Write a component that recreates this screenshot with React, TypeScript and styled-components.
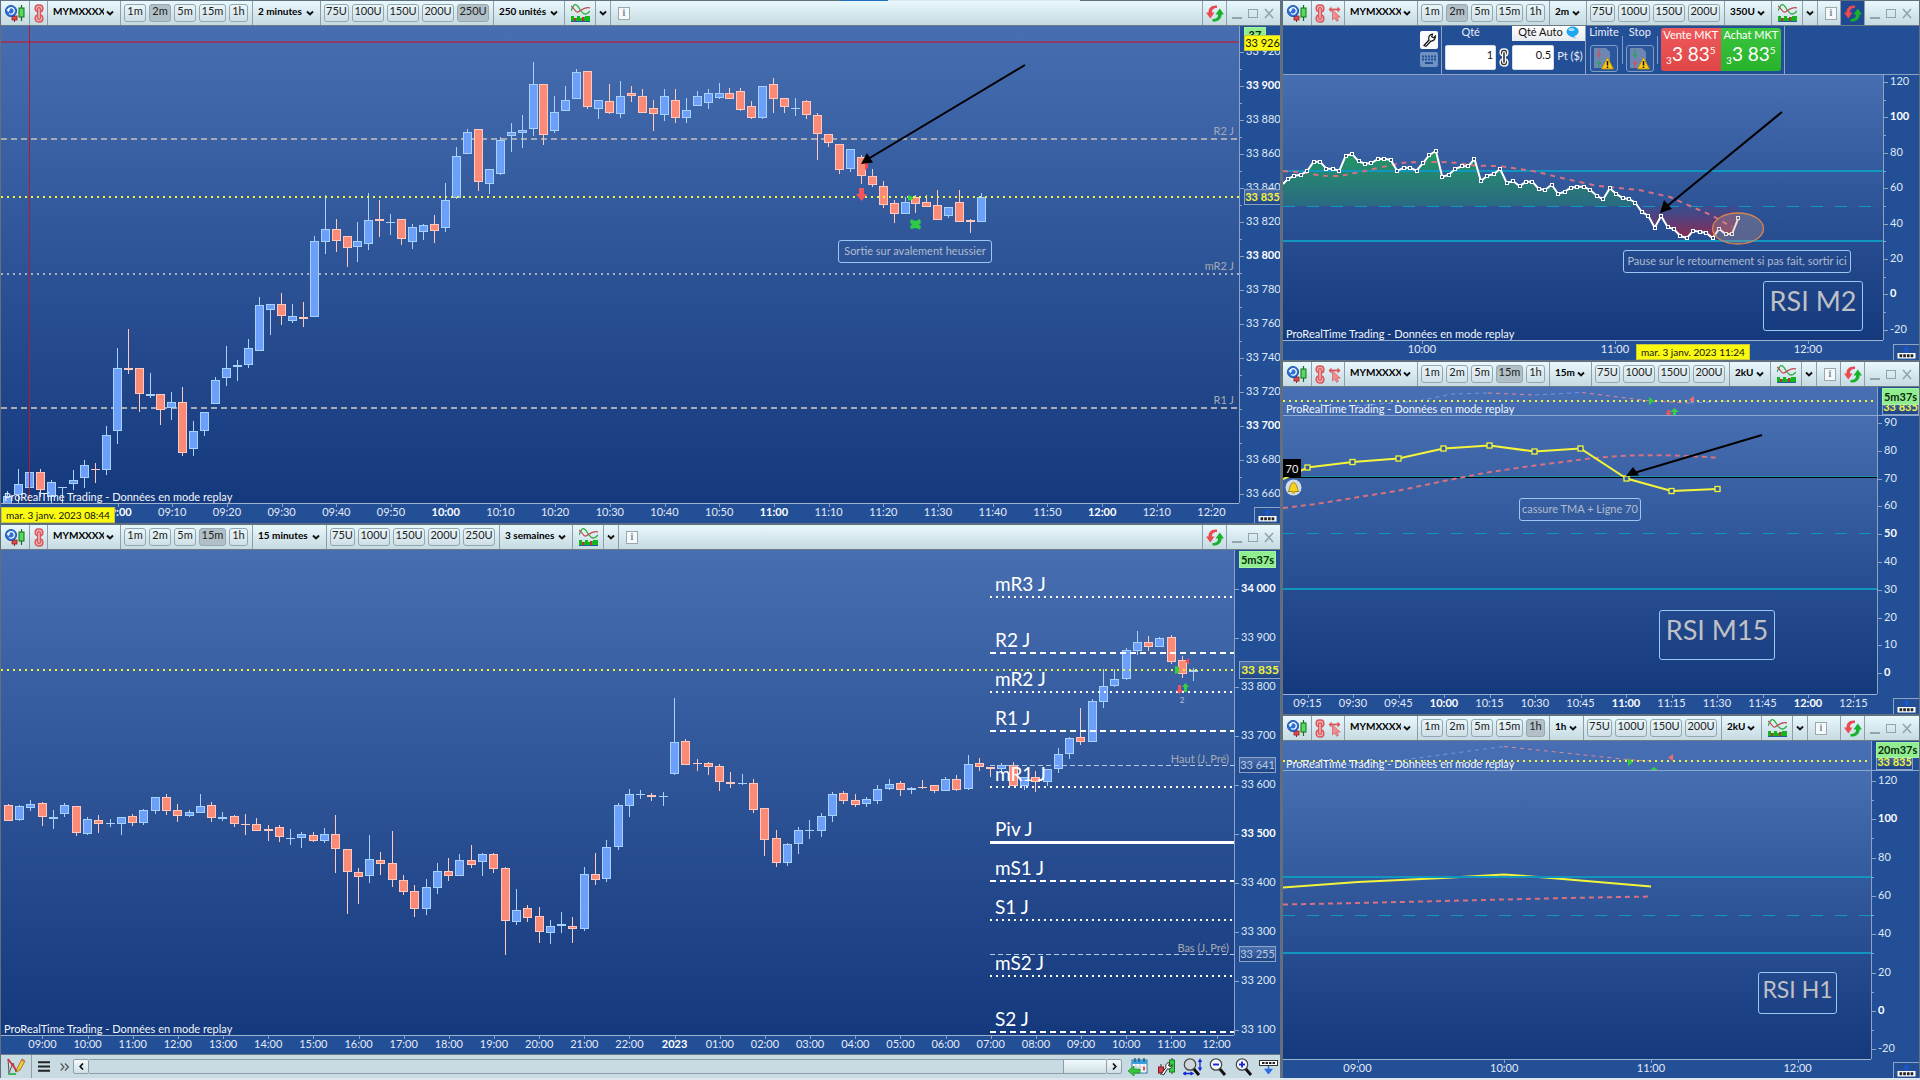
import React from "react";
import styled, { createGlobalStyle } from "styled-components";

/* ---------- theme ---------- */
const c = {
  frame: "#61707f",
  axis: "#234f97",
  line: "#8ea3c4",
  cyan: "#1196c0",
  up: "#6c9ffa",
  upEdge: "#a6d2fb",
  down: "#fb8a76",
  downEdge: "#ffc9be",
  yellow: "#f4f43a",
};

const Global = createGlobalStyle`
  *, *::before, *::after { box-sizing: border-box; }
  body {
    margin: 0;
    background: ${c.axis};
    font-family: Lato, "Noto Sans", sans-serif;
    font-size: 11px;
    line-height: 14px;
  }
  button, input, select { font: inherit; }
`;

/* ---------- page skeleton ---------- */
const Page = styled.div`
  display: flex;
  flex-direction: column;
  min-height: 100vh;
  overflow: hidden;
`;
const TopStrip = styled.div`
  height: 1px;
  background: linear-gradient(90deg, ${c.frame} 43.75%, #1f6fc0 43.75% 46.25%, #dbe8f2 46.25% 56.25%, ${c.frame} 56.25%);
`;
const BottomStrip = styled.div`
  height: 2px;
  background: #dfe7ee;
`;
const Columns = styled.main`
  flex: 1;
  display: grid;
  grid-template-columns: minmax(0, 2fr) minmax(0, 1fr);
`;
const Column = styled.div<{ $right?: boolean }>`
  display: flex;
  flex-direction: column;
  border: solid ${c.frame};
  border-width: ${(p) => (p.$right ? "0 1px 0 3px" : "0 0 0 1px")};
`;
const Win = styled.section<{ $grow: number; $gap?: boolean }>`
  display: flex;
  flex-direction: column;
  flex: ${(p) => `${p.$grow} 1 ${p.$grow}px`};
  border-top: ${(p) => (p.$gap ? `2px solid ${c.frame}` : "0")};
`;

/* ---------- toolbar ---------- */
const Toolbar = styled.header`
  display: flex;
  flex: none;
  height: 25px;
  overflow: hidden;
  background: linear-gradient(#e8f8fd, #c6dae1);
  border-bottom: 1px solid #6c7c86;
  color: #111;
`;
const Cell = styled.div<{ $w?: number }>`
  display: flex;
  flex: none;
  align-items: center;
  justify-content: center;
  gap: 3px;
  width: ${(p) => (p.$w ? `${p.$w}px` : "auto")};
  padding: ${(p) => (p.$w ? "0" : "0 4px 0 3px")};
  border-right: 1px solid #8d9ea8;
`;
const Spacer = styled.div`
  flex: 1;
  display: flex;
  align-items: center;
  min-width: 0;
  padding-left: 7px;
`;
const TfButton = styled.button<{ $on?: boolean; $w: number }>`
  width: ${(p) => p.$w}px;
  height: 18px;
  padding: 0 0 4px;
  line-height: 12px;
  color: #222;
  border: 1px solid ${(p) => (p.$on ? "#97a8b0" : "#93a7b1")};
  border-radius: 3px;
  background: ${(p) => (p.$on ? "#b1bfc6" : "linear-gradient(#e9f6fa, #cfdfe6)")};
`;
const IconButton = styled.button<{ $dark?: boolean }>`
  display: flex;
  align-items: center;
  justify-content: center;
  padding: 0;
  border: 0;
  background: ${(p) => (p.$dark ? "#1f4a92" : "none")};
  align-self: stretch;
  flex: ${(p) => (p.$dark ? 1 : "none")};
`;
const SelectCell = styled.label<{ $w: number }>`
  position: relative;
  display: flex;
  flex: none;
  align-items: center;
  width: ${(p) => p.$w}px;
  border-right: 1px solid #8d9ea8;
`;
const Select = styled.select`
  appearance: none;
  width: 100%;
  height: 22px;
  padding: 0 16px 4px 5px;
  border: 0;
  background: none;
  color: #000;
  font-size: 10px;
  font-weight: 700;
`;
const SelectArrow = styled.svg`
  position: absolute;
  right: 6px;
  top: 9px;
  pointer-events: none;
`;
const Info = styled.button`
  width: 12px;
  height: 13px;
  padding: 0;
  border: 1px solid #9aa7ad;
  background: #f4fafc;
  color: #7b878d;
  font: 700 10px/10px "Liberation Serif", serif;
`;
const WinControls = styled.div<{ $gap: number }>`
  display: flex;
  flex: none;
  align-items: center;
  gap: 6px;
  padding: 0 ${(p) => p.$gap}px 0 5px;
`;

/* ---------- chart parts ---------- */
const Body = styled.div<{ $grow: number; $sep?: boolean }>`
  display: flex;
  flex: ${(p) => `${p.$grow} 1 ${p.$grow}px`};
  border-bottom: ${(p) => (p.$sep ? "1px solid #8ea9d0" : "0")};
`;
const PlotBox = styled.div<{ $flat?: boolean }>`
  position: relative;
  flex: 1;
  min-width: 0;
  overflow: hidden;
  background: ${(p) =>
    p.$flat ? "linear-gradient(#486fb3, #436bb0)" : "linear-gradient(#466eb1, #14397c)"};
`;
const Canvas = styled.svg`
  position: absolute;
  inset: 0;
  width: 100%;
  height: 100%;
  display: block;
`;
const PriceAxisBox = styled.div<{ $w: number }>`
  position: relative;
  flex: none;
  width: ${(p) => p.$w}px;
  overflow: hidden;
  border-left: 1px solid ${c.line};
  background: ${c.axis};
`;
const PriceTick = styled.span<{ $bold?: boolean }>`
  position: absolute;
  left: 0;
  height: 12px;
  line-height: 12px;
  margin-top: -7px;
  padding-left: 6px;
  white-space: nowrap;
  color: ${(p) => (p.$bold ? "#fff" : "#dfe8f5")};
  font-weight: ${(p) => (p.$bold ? 700 : 400)};
  &::before {
    content: "";
    position: absolute;
    left: 0;
    top: 7px;
    width: 4px;
    height: 1px;
    background: ${c.line};
  }
`;
const MinorTick = styled.i`
  position: absolute;
  left: 0;
  width: 2px;
  height: 1px;
  background: ${c.line};
`;
const TimeRow = styled.div<{ $h: number }>`
  display: flex;
  flex: none;
  height: ${(p) => p.$h}px;
  background: ${c.axis};
`;
const TimeAxisBox = styled.div`
  position: relative;
  flex: 1;
  min-width: 0;
  border-top: 1px solid #9fb3d0;
`;
const TimeTick = styled.span<{ $bold?: boolean }>`
  position: absolute;
  top: 1px;
  width: 40px;
  margin-left: -20px;
  text-align: center;
  color: ${(p) => (p.$bold ? "#fff" : "#e3ebf7")};
  font-weight: ${(p) => (p.$bold ? 700 : 400)};
  &::before {
    content: "";
    position: absolute;
    left: 20px;
    top: -1px;
    width: 1px;
    height: 3px;
    background: ${c.line};
  }
`;
const DateTag = styled.span`
  position: absolute;
  z-index: 1;
  top: 3px;
  height: 16px;
  width: 114px;
  line-height: 15px;
  font-size: 10px;
  text-align: center;
  white-space: nowrap;
  background: #fafa10;
  border: 1px solid #c9c940;
  color: #111;
`;
const Corner = styled.div<{ $w: number }>`
  display: flex;
  flex: none;
  justify-content: flex-end;
  align-items: flex-end;
  width: ${(p) => p.$w}px;
`;
const CornerButton = styled.button`
  display: flex;
  align-items: flex-end;
  justify-content: center;
  width: 26px;
  height: 16px;
  padding: 0 0 1px;
  border: solid ${c.line};
  border-width: 1px 0 0 1px;
  background: ${c.axis};
`;
const Watermark = styled.span`
  position: absolute;
  left: 3px;
  bottom: -1px;
  white-space: nowrap;
  color: #f2f6fc;
`;
const Level = styled.span`
  position: absolute;
  height: 14px;
  margin-top: -7px;
  right: 5px;
  color: #a7aab4;
  white-space: nowrap;
`;
const BigLevel = styled.span`
  position: absolute;
  margin-top: -13px;
  line-height: 24px;
  font-size: 19px;
  color: #fff;
  white-space: nowrap;
`;
const Note = styled.span<{ $w: number }>`
  position: absolute;
  width: ${(p) => p.$w}px;
  height: 23px;
  line-height: 19px;
  text-align: center;
  white-space: nowrap;
  border: 1px solid #9ac8f2;
  border-radius: 3px;
  color: #aebccf;
`;
const Title = styled.span<{ $w: number; $small?: boolean }>`
  position: absolute;
  width: ${(p) => p.$w}px;
  height: ${(p) => (p.$small ? 42 : 50)}px;
  line-height: ${(p) => (p.$small ? 32 : 38)}px;
  font-size: ${(p) => (p.$small ? 23 : 27)}px;
  text-align: center;
  white-space: nowrap;
  border: 1px solid #9ac8f2;
  border-radius: 3px;
  color: #bfc1c6;
`;
type TagKind = "green" | "yellow" | "last" | "ref";
const tagLook: Record<TagKind, string> = {
  green: "background:#90ee90;color:#0b2a0b;font-weight:700;border:1px solid #a5f3a5;",
  yellow: "background:#fafa10;color:#111;border:1px solid #c9c940;",
  last: "background:linear-gradient(#4a6fae,#1d4485);color:#f4f43a;font-weight:700;border:1px solid #8ea3c4;",
  ref: "background:linear-gradient(#4a6fae,#1d4485);color:#b9c9e2;border:1px solid #8ea3c4;",
};
const Tag = styled.span<{ $kind: TagKind; $h?: number; $w?: number }>`
  position: absolute;
  left: 4px;
  width: ${(p) => p.$w ?? 37}px;
  height: ${(p) => p.$h ?? 16}px;
  line-height: ${(p) => (p.$h ?? 16) - 2}px;
  overflow: hidden;
  text-align: center;
  white-space: nowrap;
  font-size: ${(p) => (p.$w === 42 ? 12 : 11)}px;
  ${(p) => tagLook[p.$kind]}
`;
const LevelHandle = styled.span`
  position: absolute;
  left: 0;
  width: 18px;
  height: 18px;
  padding-top: 3px;
  text-align: center;
  background: #000;
  color: #eee;
`;
const Bell = styled.svg`
  position: absolute;
  left: 2px;
`;
const Count = styled.span`
  position: absolute;
  width: 10px;
  margin: -5px 0 0 -5px;
  font-size: 8px;
  line-height: 10px;
  text-align: center;
  color: #b9c4d8;
`;

/* ---------- order ticket ---------- */
const Ticket = styled.form`
  display: flex;
  flex: none;
  justify-content: center;
  height: 49px;
  margin: 0;
  background: ${c.axis};
  border-bottom: 1px solid ${c.line};
  color: #e8eef8;
`;
const TicketPart = styled.div<{ $gap?: number; $flush?: boolean }>`
  display: flex;
  gap: ${(p) => p.$gap ?? 0}px;
  padding: 0 ${(p) => (p.$flush ? 0 : 3)}px 0 3px;
  border-right: 1px solid ${c.line};
`;
const Stack = styled.div<{ $center?: boolean; $w?: number }>`
  display: flex;
  flex-direction: column;
  align-items: ${(p) => (p.$center ? "center" : "stretch")};
  width: ${(p) => (p.$w ? `${p.$w}px` : "auto")};
`;
const ToolColumn = styled.div`
  display: flex;
  flex-direction: column;
  gap: 3px;
  padding-top: 5px;
`;
const WhiteTool = styled.button<{ $dim?: boolean }>`
  display: flex;
  align-items: center;
  justify-content: center;
  width: 18px;
  height: ${(p) => (p.$dim ? 15 : 18)}px;
  padding: 0;
  border: 0;
  border-radius: 2px;
  background: ${(p) => (p.$dim ? "#6f92c3" : "#fbfcfd")};
`;
const FieldLabel = styled.label`
  height: 19px;
  line-height: 12px;
  text-align: center;
`;
const QtyInput = styled.input<{ $w: number }>`
  width: ${(p) => p.$w}px;
  height: 25px;
  padding: 0 2px 6px;
  text-align: right;
  border: 1px solid #d5dce4;
  border-radius: 2px;
  background: #fff;
  color: #111;
`;
const AutoButton = styled.button`
  display: flex;
  align-items: center;
  justify-content: space-between;
  width: 73px;
  height: 15px;
  margin: 0 0 4px;
  padding: 0 6px 3px;
  border: 0;
  background: linear-gradient(#fff, #e6eaee);
  color: #111;
`;
const InlineRow = styled.div`
  display: flex;
  align-items: center;
  gap: 3px;
`;
const UnitLabel = styled.label`
  padding-bottom: 4px;
`;
const ChainWrap = styled.div`
  display: flex;
  padding-top: 22px;
`;
const OrderButton = styled.button`
  display: flex;
  align-items: center;
  justify-content: center;
  width: 28px;
  height: 27px;
  padding: 0;
  border: 1px solid #7f9cc9;
  border-radius: 3px;
  background: #2b569c;
`;
const Divider = styled.i`
  width: 1px;
  height: 28px;
  margin-top: 10px;
  background: #7f9cc9;
`;
const Market = styled.button<{ $buy?: boolean }>`
  display: flex;
  flex-direction: column;
  align-items: center;
  width: 60px;
  height: 43px;
  margin-top: 2px;
  padding: 0;
  border: 0;
  border-radius: ${(p) => (p.$buy ? "0 3px 3px 0" : "3px 0 0 3px")};
  background: ${(p) => (p.$buy ? "linear-gradient(#3cc43f, #28b32c)" : "linear-gradient(#ee5a5c, #e04547)")};
  color: #fff;
  white-space: nowrap;
`;
const MarketPair = styled.div`
  display: flex;
`;
const Price = styled.span`
  display: flex;
  font-size: 19px;
  line-height: 24px;
`;
const PriceSmall = styled.small<{ $top?: boolean }>`
  align-self: ${(p) => (p.$top ? "flex-start" : "flex-end")};
  font-size: 10px;
  line-height: ${(p) => (p.$top ? 16 : 12)}px;
`;

/* ---------- bottom bar ---------- */
const BottomBar = styled.footer`
  display: flex;
  flex: none;
  align-items: center;
  height: 24px;
  border-top: 1px solid #6c7c86;
  background: #c8dae2;
`;
const BarButton = styled.button<{ $w: number; $edge?: boolean }>`
  display: flex;
  flex: none;
  align-items: center;
  justify-content: center;
  width: ${(p) => p.$w}px;
  height: 23px;
  padding: 0;
  border: 0;
  border-right: ${(p) => (p.$edge ? "1px solid #8d9ea8" : "0")};
  background: none;
`;
const Scroll = styled.div`
  display: flex;
  flex: 1;
  height: 15px;
  margin-right: 2px;
`;
const ScrollButton = styled.button`
  display: flex;
  align-items: center;
  justify-content: center;
  width: 16px;
  padding: 0;
  border: 1px solid #8d9ea8;
  border-radius: 2px;
  background: linear-gradient(#f4fbfd, #cfdfe5);
`;
const Track = styled.div`
  display: flex;
  flex: 1;
  justify-content: flex-end;
  border: solid #8d9ea8;
  border-width: 1px 0;
`;
const Thumb = styled.div`
  width: 43px;
  border-left: 1px solid #8d9ea8;
  background: linear-gradient(#f0fafd, #cfdfe5);
`;

/* ---------- icons ---------- */
const Chevron = ({ d = "M1 1.5 L4 4.5 L7 1.5" }: { d?: string }) => (
  <svg width="8" height="6" viewBox="0 0 8 6"><path d={d} fill="none" stroke="#111" strokeWidth="1.9" /></svg>
);
const ReplayIcon = () => (
  <svg width="20" height="18" viewBox="0 0 20 18">
    <path d="M9.5 11v7" stroke="#8d1f1f" />
    <rect x="7" y="12" width="5" height="4" fill="#e04a4a" stroke="#8d1f1f" strokeWidth=".8" />
    <path d="M16.5 1v16" stroke="#12701a" strokeWidth="1.2" />
    <rect x="14" y="4" width="5" height="9" fill="#56d95c" stroke="#12701a" />
    <circle cx="6" cy="7" r="5.6" fill="#2d6fd8" stroke="#1446a0" strokeWidth=".8" />
    <path d="M3 6.2a3.2 3.2 0 1 1 1.2 3.3" fill="none" stroke="#fff" strokeWidth="1.3" />
    <path d="M1.6 5.2l1.6 3 2.1-2.6z" fill="#fff" />
  </svg>
);
const LinkIcon = ({ color = "#d9565b", fill = "#f0b5b8" }: { color?: string; fill?: string }) => (
  <svg width="10" height="19" viewBox="0 0 10 19">
    <g fill={fill} stroke={color} strokeWidth="1.5">
      <rect x="1.2" y="1" width="7.6" height="7" rx="3.2" />
      <rect x="1.2" y="11" width="7.6" height="7" rx="3.2" />
    </g>
    <rect x="3.6" y="3.6" width="2.8" height="11.8" rx="1.4" fill={fill} stroke={color} strokeWidth="1.2" />
  </svg>
);
const PointerIcon = () => (
  <svg width="13" height="17" viewBox="0 0 13 17">
    <path d="M2 4.500h9" stroke="#d9565b" strokeWidth="1.8" />
    <path d="M3.500 1.500L.5 4.500l3 3zM9.500 1.500l3 3-3 3z" fill="#d9565b" />
    <path d="M4.500 5v10l2.400-2.200 1.600 3.400 1.900-.8-1.600-3.300h3.400z" fill="#f08f92" stroke="#d9565b" strokeWidth=".7" />
  </svg>
);
const StudyIcon = () => (
  <svg width="19" height="20" viewBox="0 0 19 20">
    <path d="M0 8C3 0 5 0 8 5s6 9 11 3" fill="none" stroke="#2eae3a" strokeWidth="1.3" />
    <path d="M0 3c3 1 4 7 7 6s6-6 12-4" fill="none" stroke="#c2474e" strokeWidth="1.3" />
    <path d="M0 19v-6h3v2h3v-2h3v2h3v-1h2v-1h5v6z" fill="#12b51c" />
    <path d="M3 18v-3h2v3zM11 18v-4h2v4z" fill="#c2303a" />
    <path d="M0 18.500h19" stroke="#2060a0" />
  </svg>
);
const SwapIcon = () => (
  <svg width="18" height="17" viewBox="0 0 18 17">
    <path d="M11 .5C5 0 2 3.500 2.600 8H6C5.600 5 7.500 2.800 11 3z" fill="#ea4a50" />
    <path d="M0 7.500h8.500L4.300 13.500z" fill="#ea4a50" />
    <path d="M6.500 16.500C12.500 17 16 13.500 15.600 9H12c.5 3-1.500 5-5.500 5z" fill="#17b22b" />
    <path d="M9.500 9.500H18L13.800 3.500z" fill="#17b22b" />
  </svg>
);
const WinIcon = ({ kind }: { kind: "min" | "max" | "close" }) => (
  <svg width="10" height="12" viewBox="0 0 10 12" fill="none" stroke="#93a3ab">
    {kind === "min" && <path d="M0 11h10" strokeWidth="2" />}
    {kind === "max" && <rect x=".5" y="2.500" width="9" height="8" />}
    {kind === "close" && <path d="M1 2l8 9M9 2l-8 9" strokeWidth="1.600" />}
  </svg>
);
const RowIcon = ({ down }: { down?: boolean }) => (
  <svg width="19" height="14" viewBox="0 0 19 14">
    {down ? (
      <><rect x=".5" y=".5" width="18" height="5" fill="#fff" stroke="#333" /><path d="M3 3h13" stroke="#222" strokeWidth="2" strokeDasharray="2.500 1" /><path d="M9.500 6v4M9.500 13.500l-3-4h6z" stroke="#2a6fe0" strokeWidth="1.500" fill="#2a6fe0" /></>
    ) : (
      <><path d="M9.500 1l-3 3.500h6z" fill="#1d56d8" /><path d="M9.500 4v4" stroke="#1d56d8" strokeWidth="2" /><rect x=".5" y="8" width="18" height="5.500" fill="#fff" /><path d="M2.500 10.800h14" stroke="#222" strokeWidth="3" strokeDasharray="2.700 1" /></>
    )}
  </svg>
);
const MenuIcon = () => (
  <svg width="12" height="11" viewBox="0 0 12 11"><path d="M0 1.200h12M0 5.500h12M0 9.800h12" stroke="#222" strokeWidth="2" /></svg>
);
const MoreIcon = () => (
  <svg width="9" height="8" viewBox="0 0 9 8"><path d="M.7.5L4 4 .7 7.500M5 .5L8.300 4 5 7.500" fill="none" stroke="#555" strokeWidth="1.200" /></svg>
);
const ArrowGlyph = ({ left }: { left?: boolean }) => (
  <svg width="5" height="7" viewBox="0 0 5 7"><path d={left ? "M4 .5L1.200 3.500 4 6.500" : "M1 .5L3.800 3.500 1 6.500"} fill="none" stroke="#111" strokeWidth="1.700" /></svg>
);
const PencilIcon = () => (
  <svg width="18" height="17" viewBox="0 0 18 17">
    <path d="M1 1l1 14 4-10 3 9" fill="none" stroke="#555" />
    <path d="M1 1l9 12" stroke="#d8303a" strokeWidth="1.700" />
    <path d="M1 16h8" stroke="#1fae3c" strokeWidth="1.600" />
    <path d="M9 14l1.300-4L15 1l3 2-5 9z" fill="#f6cc3c" stroke="#8d6a10" strokeWidth=".8" />
    <path d="M14.500 1.800l3 1.800" stroke="#e36a50" strokeWidth="1.500" />
  </svg>
);
const CalendarIcon = () => (
  <svg width="20" height="18" viewBox="0 0 20 18">
    <rect x="4" y="2" width="15" height="13" fill="#fff" stroke="#2a6f9c" />
    <rect x="4" y="2" width="15" height="4" fill="#3da0dc" />
    <path d="M7 0v4M11 0v4M16 0v4" stroke="#1c5278" strokeWidth="1.300" />
    <path d="M8 6v9M12 6v9M16 6v9M4 9h15M4 12h15" stroke="#bccad2" />
    <path d="M0 13l6-5v3h6v4H6v3z" fill="#35c43c" stroke="#1b8a25" strokeWidth=".7" />
    <rect x="15" y="9" width="2" height="3" fill="#e04a4a" />
  </svg>
);
const CandleToolIcon = () => (
  <svg width="17" height="18" viewBox="0 0 17 18">
    <path d="M3 6v11M14 0v16" stroke="#333" />
    <rect x=".5" y="9" width="5" height="6" fill="#d8414a" stroke="#84161d" />
    <rect x="11.500" y="2" width="5" height="12" fill="#39cf48" stroke="#137a20" />
    <path d="M3.500 15.500L8 9.500c-1-3 1-5.500 4-4.500l-1.500 2.500 2 1.200L14 6.500c.5 3.500-2 5-4.500 4.300L5.500 17z" fill="#fff" stroke="#222" strokeWidth="1" />
  </svg>
);
const LensIcon = ({ kind }: { kind: "fit" | "out" | "in" }) => (
  <svg width="19" height="18" viewBox="0 0 19 18">
    <path d="M10 10l6 7" stroke="#111" strokeWidth="3" />
    <circle cx="7" cy="6.500" r="5.700" fill={kind === "fit" ? "#cfd6da" : "#f2f8fb"} stroke="#444" strokeWidth="1.200" />
    {kind !== "fit" && <path d="M4 6.500h6" stroke="#1a25d8" strokeWidth="1.900" />}
    {kind === "in" && <path d="M7 3.500v6" stroke="#1a25d8" strokeWidth="1.900" />}
    {kind === "fit" && <path d="M17 2v9M15.500 4L17 1.500 18.500 4M15.500 9.500L17 12l1.500-2.500M1 15.500h8M3 14l-2.500 1.500L3 17M7.500 14l2.500 1.500L7.500 17" fill="none" stroke="#1a25d8" strokeWidth="1.300" />}
  </svg>
);
const WrenchIcon = () => (
  <svg width="13" height="14" viewBox="0 0 13 14"><path d="M1 12.500L6 7C5 4 7 1 9.500 1L8.700 3.800l1.800 1L12.300 3c.5 3-2 5.300-4.300 5L3 13.300z" fill="#fff" stroke="#111" strokeWidth="1.200" /></svg>
);
const KeyboardIcon = () => (
  <svg width="14" height="10" viewBox="0 0 14 10"><path d="M0 1.500h14M0 4.500h14" stroke="#234f97" strokeWidth="2" strokeDasharray="2 1" /><path d="M3 8h8" stroke="#234f97" strokeWidth="2" /></svg>
);
const BubbleIcon = () => (
  <svg width="13" height="12" viewBox="0 0 13 12"><path d="M6.500.5a6 4.800 0 1 1-1 9.500c2 0 4 .5 4 2C6 11 0 10 .6 5.200A6 4.800 0 0 1 6.500.5z" fill="#1ea7ee" /><ellipse cx="5.500" cy="3.500" rx="3" ry="1.600" fill="#a6e0fb" /></svg>
);
const OrderIcon = ({ top, bottom }: { top: string; bottom: string }) => (
  <svg width="21" height="22" viewBox="0 0 21 22">
    <path d="M1 0h12l4 4v16H1z" fill="#6d87b3" />
    <path d="M5.200 1h1.600v5h2L6 10 3.200 6h2z" fill={top} opacity=".85" />
    <path d="M5.200 20h1.600v-4h2L6 12l-2.800 4h2z" fill={bottom} opacity=".85" />
    <path d="M14.500 9.500l6 11.500h-12z" fill="#fbc81a" stroke="#b98a08" strokeWidth=".8" />
    <path d="M14.500 13v4.500M14.500 18.500v1.500" stroke="#111" strokeWidth="1.500" />
  </svg>
);

/* ---------- geometry ---------- */
interface Frame { x: number; y: number; w: number; h: number }
const left = (f: Frame, x: number) => `${((x - f.x) / f.w) * 100}%`;
const top = (f: Frame, y: number) => `${((y - f.y) / f.h) * 100}%`;

const Draw = ({ f, children }: { f: Frame; children: React.ReactNode }) => (
  <Canvas viewBox={`${f.x} ${f.y} ${f.w} ${f.h}`} preserveAspectRatio="none" aria-hidden="true">{children}</Canvas>
);

type Style = "solid" | "dash" | "dot" | "long";
const dashes: Record<Style, string | undefined> = { solid: undefined, dash: "6 4", dot: "2 4", long: "12 12" };
const H = ({ y, x1, x2, color, kind = "solid", t = 2 }: { y: number; x1: number; x2: number; color: string; kind?: Style; t?: number }) => (
  <path d={`M${x1} ${y + (t % 2 ? 0.5 : 0)}H${x2}`} stroke={color} strokeWidth={t} strokeDasharray={dashes[kind]} shapeRendering="crispEdges" />
);

type Candle = [0 | 1, number, number, number, number];
/* direction, high, body top, body bottom, low: thirds of a pixel from the base line */
const Candles = ({ data, x0, step, base }: { data: Candle[]; x0: number; step: number; base: number }) => (
  <g shapeRendering="crispEdges">
    {data.map(([up, hi, bt, bb, lo], i) => {
      const x = Math.floor(x0 + step * i);
      const y = (v: number) => Math.round(base + v / 3);
      const b1 = y(bt);
      const h = Math.max(1, y(bb) - b1);
      return (
        <g key={i}>
          <rect x={x} y={y(hi)} width="1" height={Math.max(1, y(lo) - y(hi))} fill={up ? c.upEdge : c.downEdge} />
          <rect x={x - 4} y={b1} width="9" height={h} fill={up ? c.upEdge : c.downEdge} />
          {h > 2 && <rect x={x - 3} y={b1 + 1} width="7" height={h - 2} fill={up ? c.up : c.down} />}
        </g>
      );
    })}
  </g>
);
const Arrow = ({ from, to, head }: { from: string; to: string; head: string }) => (
  <g><path d={`M${from}L${to}`} stroke="#000" strokeWidth="2" /><path d={`M${head}z`} fill="#000" /></g>
);

const m2: Candle[] = [
  [1,1473,1488,1515,1515],[1,1407,1452,1484,1510],[1,1407,1416,1463,1473],[0,1407,1416,1469,1490],[1,1440,1447,1490,1510],
  [1,1460,1460,1462,1510],[1,1410,1441,1453,1469],[1,1380,1396,1433,1463],[0,1389,1407,1411,1448],[1,1278,1306,1411,1424],
  [1,1045,1105,1294,1331],[0,987,1105,1111,1121],[0,1105,1105,1183,1235],[1,1119,1183,1187,1193],[0,1183,1183,1229,1274],
  [1,1176,1207,1224,1259],[0,1161,1207,1358,1367],[1,1264,1294,1346,1367],[1,1237,1237,1294,1307],[1,1132,1141,1213,1213],
  [1,1038,1105,1135,1157],[1,1080,1096,1102,1142],[1,1017,1045,1096,1103],[1,891,916,1054,1054],[1,913,913,931,1004],
  [0,879,913,949,974],[1,912,949,964,968],[0,906,952,958,980],[1,708,724,950,950],[1,586,688,727,762],
  [0,657,688,724,755],[0,709,709,745,800],[1,667,724,740,785],[1,579,661,733,749],[0,600,657,662,711],
  [1,642,666,668,704],[0,657,657,718,734],[1,673,682,727,746],[1,673,676,697,719],[0,645,673,694,728],
  [1,549,601,683,695],[1,441,469,593,597],[1,387,397,463,463],[0,388,388,545,572],[1,508,508,551,581],
  [1,411,421,521,524],[1,369,397,407,456],[1,345,391,398,444],[1,186,253,388,407],[0,253,253,404,434],
  [1,288,337,392,398],[1,258,301,332,332],[1,207,217,296,297],[0,214,214,320,326],[1,301,301,326,356],
  [0,252,304,338,342],[1,243,289,341,353],[0,258,280,287,305],[0,267,289,338,339],[0,300,325,341,392],
  [1,267,289,346,362],[0,267,301,353,369],[1,294,331,355,369],[1,273,289,317,318],[1,267,280,310,326],
  [1,249,280,295,296],[0,264,280,296,297],[0,264,274,331,333],[0,303,319,353,357],[1,259,259,355,356],
  [0,234,253,296,339],[0,294,295,320,338],[1,294,324,326,347],[0,299,304,346,356],[0,339,346,403,480],
  [0,403,403,428,440],[0,433,433,509,521],[1,448,448,506,516],[0,466,472,529,552],[0,507,529,556,560],
  [0,543,559,616,623],[0,600,610,643,668],[1,591,607,643,643],[0,586,591,611,639],[0,585,607,622,622],
  [0,570,616,661,661],[1,622,622,647,653],[0,570,607,667,667],[0,657,661,667,699],[1,579,592,667,667],
];
const m15: Candle[] = [
  [0,73,76,122,122],[1,75,79,119,122],[1,60,72,83,92],[0,67,70,110,137],[1,91,110,116,147],[1,70,76,103,110],
  [0,79,79,158,167],[1,111,118,161,165],[0,105,121,131,158],[1,117,129,131,141],[1,112,112,131,165],[0,103,109,128,137],
  [1,88,91,128,134],[1,52,52,92,101],[0,43,52,92,104],[0,73,91,107,125],[1,91,97,107,112],[1,43,79,98,98],
  [0,67,76,113,125],[1,97,111,116,122],[0,106,109,131,140],[0,102,131,133,165],[0,115,133,152,152],[0,135,147,152,183],
  [0,136,142,170,185],[1,148,174,176,195],[1,156,163,173,203],[0,157,166,182,185],[1,145,163,182,188],[0,105,163,208,279],
  [0,208,208,275,402],[0,265,277,290,372],[1,165,238,287,308],[0,216,241,251,285],[0,153,250,299,320],[0,286,301,335,344],
  [0,315,334,386,410],[1,297,322,386,404],[1,249,274,323,342],[0,235,274,287,302],[1,222,241,287,287],[0,195,241,254,265],
  [1,219,223,247,287],[0,220,223,266,278],[0,261,265,422,525],[1,327,391,425,434],[0,375,385,413,425],[0,381,409,455,488],
  [1,421,439,458,491],[1,396,433,437,458],[0,411,438,446,488],[1,261,283,446,452],[0,219,283,299,314],[1,180,202,296,307],
  [1,70,76,200,209],[1,27,43,77,110],[1,30,43,46,57],[0,38,46,52,63],[1,37,49,51,77],[1,-246,-113,-19,-16],
  [0,-122,-116,-46,-46],[0,-63,-51,-49,-28],[0,-55,-50,-40,-16],[0,-47,-41,5,32],[0,-23,7,12,23],[1,-17,9,11,15],
  [0,-3,10,91,99],[0,84,84,179,228],[0,151,175,250,260],[1,189,193,250,257],[1,142,151,193,221],[1,120,151,153,177],
  [1,100,109,153,170],[1,36,43,107,125],[0,34,40,62,73],[0,43,61,74,80],[1,51,58,71,80],[1,16,28,64,71],
  [1,-2,13,28,29],[0,4,10,31,47],[1,22,25,31,41],[0,0,21,23,27],[0,16,16,34,38],[1,-8,-2,34,34],
  [0,-14,-2,31,32],[1,-74,-47,28,29],[0,-65,-50,-38,-28],[0,-39,-38,-34,-9],[1,-50,-44,-34,-18],[0,-53,-44,18,18],
  [1,-10,-8,17,29],[0,-27,-8,5,35],[1,-33,-32,5,17],[1,-95,-77,-32,-20],[1,-130,-125,-79,-62],[0,-216,-128,-115,-106],
  [1,-242,-236,-115,-115],[1,-333,-281,-235,-217],[1,-333,-302,-283,-279],[1,-395,-389,-304,-301],[1,-447,-413,-388,-376],
  [0,-431,-413,-398,-388],[1,-428,-425,-400,-398],[0,-434,-428,-355,-349],[0,-372,-359,-319,-307],[1,-335,-329,-323,-298],
];

/* RSI of the 2-minute chart, one value for each bar: thirds of a pixel */
const rsiStep = 6.437;
const rsi = [537,527,524,514,485,485,506,506,513,467,462,484,491,489,477,476,480,513,503,503,512,489,465,453,531,524,507,499,499,477,543,527,522,507,549,543,558,545,545,567,569,554,582,575,563,560,560,570,587,598,565,581,594,597,608,636,647,683,648,681,688,708,714,692,695,699,714,687,702,702,654];
const rsiPts = rsi.map((v, i) => [1287.800 + i * rsiStep, v / 3] as const);
const toPath = (pts: readonly (readonly [number, number])[]) => pts.map(([x, y]) => `${x.toFixed(1)},${y.toFixed(1)}`).join("L");
const crossX = 1638;

/* ---------- axes ---------- */
interface PTick { v: string; y: number; bold?: boolean }
const priceTicks = (from: number, n: number, dv: number, y0: number, dy: number, boldEvery: number): PTick[] =>
  Array.from({ length: n }, (_, i) => {
    const v = from - i * dv;
    const s = Math.abs(v) >= 1000 ? `${Math.floor(v / 1000)} ${String(v % 1000).padStart(3, "0")}` : String(v);
    return { v: s, y: y0 + i * dy, bold: v % boldEvery === 0 };
  });
const PriceAxis = ({ f, w, ticks, minor, children }: { f: Frame; w: number; ticks: PTick[]; minor?: number; children?: React.ReactNode }) => (
  <PriceAxisBox $w={w}>
    {ticks.map((t) => <PriceTick key={t.v} $bold={t.bold} style={{ top: top(f, t.y) }}>{t.v}</PriceTick>)}
    {minor && ticks.map((t) => <MinorTick key={t.v} style={{ top: top(f, t.y + minor) }} />)}
    {children}
  </PriceAxisBox>
);
const TimeAxis = ({ f, w, h, labels, x0, step, bold, children, corner = true }: {
  f: Frame; w: number; h: number; labels: string[]; x0: number; step: number; bold?: string[]; children?: React.ReactNode; corner?: boolean;
}) => (
  <TimeRow $h={h}>
    <TimeAxisBox>
      {labels.map((l, i) => <TimeTick key={i} $bold={bold?.includes(l)} style={{ left: left(f, x0 + i * step) }}>{l}</TimeTick>)}
      {children}
    </TimeAxisBox>
    <Corner $w={w}>{corner && <CornerButton type="button" aria-label="Panneau"><RowIcon /></CornerButton>}</Corner>
  </TimeRow>
);

/* ---------- toolbar ---------- */
const Drop = ({ w, value, label }: { w: number; value: string; label: string }) => (
  <SelectCell $w={w}>
    <Select aria-label={label} defaultValue={value}><option>{value}</option></Select>
    <SelectArrow width="8" height="6" viewBox="0 0 8 6"><path d="M1 1.500L4 4.500 7 1.500" fill="none" stroke="#111" strokeWidth="1.900" /></SelectArrow>
  </SelectCell>
);
const widths: Record<string, number> = { "1m": 22, "2m": 22, "5m": 22, "15m": 27, "1h": 19, "75U": 25 };
const Bar = ({ side, tf, period, periodW, units, unit, range, rangeW, dark }: {
  side: "left" | "right"; tf: string; period: string; periodW: number; units: string[]; unit?: string; range: string; rangeW: number; dark?: boolean;
}) => (
  <Toolbar>
    <Cell $w={29}><IconButton type="button" aria-label="Replay"><ReplayIcon /></IconButton></Cell>
    <Cell $w={side === "left" ? 18 : 33}>
      <IconButton type="button" aria-label="Lier"><LinkIcon /></IconButton>
      {side === "right" && <IconButton type="button" aria-label="Pointeur"><PointerIcon /></IconButton>}
    </Cell>
    <Drop w={73} value="MYMXXXX" label="Instrument" />
    <Cell>{["1m", "2m", "5m", "15m", "1h"].map((t) => <TfButton type="button" key={t} $w={widths[t]} $on={t === tf}>{t}</TfButton>)}</Cell>
    <Drop w={periodW} value={period} label="Période" />
    <Cell>{units.map((t) => <TfButton type="button" key={t} $w={widths[t] ?? 32} $on={t === unit}>{t}</TfButton>)}</Cell>
    <Drop w={rangeW} value={range} label="Historique" />
    <Cell $w={31}><IconButton type="button" aria-label="Indicateurs"><StudyIcon /></IconButton></Cell>
    <Cell $w={15}><IconButton type="button" aria-label="Options"><Chevron /></IconButton></Cell>
    <Spacer><Info type="button" aria-label="Information">i</Info></Spacer>
    <Cell $w={1} />
    <Cell $w={24}><IconButton type="button" $dark={dark} aria-label="Synchroniser"><SwapIcon /></IconButton></Cell>
    <WinControls $gap={side === "left" ? 6 : 7}>
      <IconButton type="button" aria-label="Réduire"><WinIcon kind="min" /></IconButton>
      <IconButton type="button" aria-label="Agrandir"><WinIcon kind="max" /></IconButton>
      <IconButton type="button" aria-label="Fermer"><WinIcon kind="close" /></IconButton>
    </WinControls>
  </Toolbar>
);
const Mark = () => <Watermark>ProRealTime Trading - Données en mode replay</Watermark>;

const units5 = ["75U", "100U", "150U", "200U", "250U"];
const units4 = units5.slice(0, 4);
const hours = (from: number, n: number) => Array.from({ length: n }, (_, i) => `${String(from + i).padStart(2, "0")}:00`);

/* ---------- windows ---------- */
const f1: Frame = { x: 1, y: 26, w: 1238, h: 477 };
const Chart2m = () => {
  const times = Array.from({ length: 21 }, (_, i) => {
    const m = 540 + i * 10;
    return `${String(Math.floor(m / 60)).padStart(2, "0")}:${String(m % 60).padStart(2, "0")}`;
  });
  return (
    <Win $grow={522}>
      <Bar side="left" tf="2m" period="2 minutes" periodW={68} units={units5} unit="250U" range="250 unités" rangeW={71} />
      <Body $grow={477}>
        <PlotBox>
          <Draw f={f1}>
            <H y={139} x1={1} x2={1239} color="#a5aab3" kind="dash" />
            <H y={274} x1={1} x2={1239} color="#a5b0c3" kind="dot" />
            <H y={408} x1={1} x2={1239} color="#a5aab3" kind="dash" />
            <Candles data={m2} x0={7.800} step={10.942} base={0} />
            <H y={42} x1={1} x2={1239} color="#8f3b66" />
            <path d="M29.500 26V503" stroke="#b51a35" shapeRendering="crispEdges" />
            <H y={197} x1={1} x2={1239} color={c.yellow} kind="dot" />
            <path d="M865 163v7l3-2v-5z" fill="#ee4a50" />
            <path d="M859 188h5v6h3l-5.500 7-5.500-7h3z" fill="#f0555c" />
            <path d="M908 195l5 2v2l-5 2z" fill="#35cf45" />
            <path d="M911 219l4.500 2 4.500-2 1 4-2 1.500 2 2-1 3-4.500-1.500L911 229l-1-2.500 2-2-2-2z" fill="#2fc945" />
            <Arrow from="1025,65" to="868,159" head="861,164L873,162.500L867,153" />
          </Draw>
          <Level style={{ top: top(f1, 131) }}>R2 J</Level>
          <Level style={{ top: top(f1, 266) }}>mR2 J</Level>
          <Level style={{ top: top(f1, 400) }}>R1 J</Level>
          <Note $w={154} style={{ left: left(f1, 838), top: top(f1, 240) }}>Sortie sur avalement heussier</Note>
          <Mark />
        </PlotBox>
        <PriceAxis f={f1} w={41} ticks={priceTicks(33920, 14, 20, 52, 34, 100)} minor={17}>
          <Tag $kind="green" $w={22} style={{ top: top(f1, 27) }}>37</Tag>
          <Tag $kind="yellow" style={{ top: top(f1, 35) }}>33 926</Tag>
          <Tag $kind="last" style={{ top: top(f1, 189) }}>33 835</Tag>
        </PriceAxis>
      </Body>
      <TimeAxis f={f1} w={41} h={20} labels={times} x0={117.500} step={54.700} bold={["09:00", "10:00", "11:00", "12:00"]}>
        <DateTag style={{ left: left(f1, 1) }}>mar. 3 janv. 2023 08:44</DateTag>
      </TimeAxis>
    </Win>
  );
};

const f2: Frame = { x: 1, y: 550, w: 1233, h: 485 };
const pivots: [string, number, Style, number][] = [
  ["mR3 J", 597, "dot", 2], ["R2 J", 653, "dash", 2], ["mR2 J", 692, "dot", 2], ["R1 J", 731, "dash", 2], ["mR1 J", 787, "dot", 2],
  ["Piv J", 842, "solid", 3], ["mS1 J", 881, "dash", 2], ["S1 J", 920, "dot", 2], ["mS2 J", 976, "dot", 2], ["S2 J", 1032, "dash", 2],
];
const Chart15m = () => (
  <Win $grow={531} $gap>
    <Bar side="left" tf="15m" period="15 minutes" periodW={74} units={units5} range="3 semaines" rangeW={73} />
    <Body $grow={485}>
      <PlotBox>
        <Draw f={f2}>
          <Candles data={m15} x0={8.400} step={11.290} base={780} />
          {pivots.map(([n, y, k, t]) => <H key={n} y={y} x1={990} x2={1234} color="#fff" kind={k} t={t} />)}
          <path d="M990 765.500H1234M990 954.500H1234" stroke="#b9c9e0" strokeDasharray="5 3" shapeRendering="crispEdges" />
          <H y={670} x1={1} x2={1234} color={c.yellow} kind="dot" />
          <path d="M1185 661l4-3v7z" fill="#ee4a50" />
          <path d="M1175 666v8l4-1v-6z" fill="#35cf45" />
          <path d="M1178 685h3v5h2l-3.500 4-3.500-4h2z" fill="#f0555c" />
          <path d="M1184 692v-5h-2l3.500-4 3.500 4h-2v5z" fill="#35cf45" />
        </Draw>
        {pivots.map(([n, y]) => <BigLevel key={n} style={{ left: left(f2, 995), top: top(f2, y - 12) }}>{n}</BigLevel>)}
        <Level style={{ top: top(f2, 759) }}>Haut (J, Pré)</Level>
        <Level style={{ top: top(f2, 948) }}>Bas (J, Pré)</Level>
        <Count style={{ left: left(f2, 1182), top: top(f2, 700) }}>2</Count>
        <Mark />
      </PlotBox>
      <PriceAxis f={f2} w={46} ticks={priceTicks(34000, 10, 100, 589, 49, 500)}>
        <Tag $kind="green" $h={17} style={{ top: top(f2, 551) }}>5m37s</Tag>
        <Tag $kind="last" $h={18} $w={42} style={{ top: top(f2, 661) }}>33 835</Tag>
        <Tag $kind="ref" style={{ top: top(f2, 757) }}>33 641</Tag>
        <Tag $kind="ref" style={{ top: top(f2, 946) }}>33 255</Tag>
      </PriceAxis>
    </Body>
    <TimeAxis f={f2} w={46} h={19} labels={[...hours(9, 14), "2023", ...hours(1, 12)]} x0={42.400} step={45.160} bold={["2023"]} corner={false} />
  </Win>
);

const fA: Frame = { x: 1283, y: 75, w: 600, h: 265 };
const OrderTicket = () => (
  <Ticket onSubmit={(e) => e.preventDefault()}>
    <TicketPart>
      <ToolColumn>
        <WhiteTool type="button" aria-label="Réglages"><WrenchIcon /></WhiteTool>
        <WhiteTool type="button" $dim aria-label="Clavier"><KeyboardIcon /></WhiteTool>
      </ToolColumn>
    </TicketPart>
    <TicketPart $gap={3} $flush>
      <Stack $w={51}>
        <FieldLabel htmlFor="qty">Qté</FieldLabel>
        <QtyInput id="qty" $w={51} defaultValue="1" />
      </Stack>
      <ChainWrap><LinkIcon color="#f4f6f8" fill="#333" /></ChainWrap>
      <Stack>
        <AutoButton type="button">Qté Auto <BubbleIcon /></AutoButton>
        <InlineRow><QtyInput id="pt" $w={42} defaultValue="0.5" /><UnitLabel htmlFor="pt">Pt ($)</UnitLabel></InlineRow>
      </Stack>
    </TicketPart>
    <TicketPart $gap={3}>
      <Stack $center><FieldLabel htmlFor="lim">Limite</FieldLabel><OrderButton id="lim" type="button"><OrderIcon top="#c8546c" bottom="#2f9f62" /></OrderButton></Stack>
      <Divider />
      <Stack $center><FieldLabel htmlFor="stop">Stop</FieldLabel><OrderButton id="stop" type="button"><OrderIcon top="#2f9f62" bottom="#c8546c" /></OrderButton></Stack>
      <Divider />
      <MarketPair>
        <Market type="button">Vente MKT<Price><PriceSmall>3</PriceSmall>3 83<PriceSmall $top>5</PriceSmall></Price></Market>
        <Market type="button" $buy>Achat MKT<Price><PriceSmall>3</PriceSmall>3 83<PriceSmall $top>5</PriceSmall></Price></Market>
      </MarketPair>
    </TicketPart>
  </Ticket>
);
const RsiM2 = () => (
  <Win $grow={359}>
    <Bar side="right" tf="2m" period="2m" periodW={37} units={units4} range="350U" rangeW={47} dark />
    <OrderTicket />
    <Body $grow={265}>
      <PlotBox>
        <Draw f={fA}>
          <defs>
            <linearGradient id="bull" x1="0" y1="150" x2="0" y2="206" gradientUnits="userSpaceOnUse"><stop offset="0" stopColor="#1fa05e" stopOpacity=".95" /><stop offset="1" stopColor="#25806a" stopOpacity=".5" /></linearGradient>
            <linearGradient id="bear" x1="0" y1="206" x2="0" y2="238" gradientUnits="userSpaceOnUse"><stop offset="0" stopColor="#7a2f6a" stopOpacity=".15" /><stop offset="1" stopColor="#a8243f" stopOpacity=".85" /></linearGradient>
          </defs>
          <path d={`M1283,206L1283,184L${toPath(rsiPts.slice(0, 55))}L${crossX},206z`} fill="url(#bull)" />
          <path d={`M${crossX},206L${toPath(rsiPts.slice(55))}L1738,206z`} fill="url(#bear)" />
          <H y={206} x1={1283} x2={1883} color={c.cyan} kind="long" t={1} />
          <H y={171} x1={1283} x2={1883} color={c.cyan} />
          <H y={241} x1={1283} x2={1883} color={c.cyan} />
          <path d="M1283 171L1307 173Q1330 178 1345 175T1378 168T1402 163T1432 162T1464 164T1500 166L1533 171L1566 179L1598 186L1639 190L1670 197L1690 206L1713 216L1732 227" fill="none" stroke="#d77180" strokeWidth="2" strokeDasharray="5 5" />
          <path d={`M1283,184L${toPath(rsiPts)}`} fill="none" stroke="#fff" strokeWidth="2" />
          {rsiPts.map(([x, y], i) => <rect key={i} x={Math.round(x) - 1.500} y={Math.round(y) - 1.500} width="3" height="3" fill="#2a4f80" stroke="#fff" />)}
          <ellipse cx="1738" cy="228.500" rx="25.500" ry="15.500" fill="#c89a90" fillOpacity=".3" stroke="#d9844e" strokeWidth="1.300" />
          <Arrow from="1782,112" to="1666,207" head="1660,213L1672,209L1664,200" />
        </Draw>
        <Note $w={228} style={{ left: left(fA, 1623), top: top(fA, 250) }}>Pause sur le retournement si pas fait, sortir ici</Note>
        <Title $w={100} style={{ left: left(fA, 1763), top: top(fA, 281) }}>RSI M2</Title>
        <Mark />
      </PlotBox>
      <PriceAxis f={fA} w={36} ticks={priceTicks(120, 8, 20, 82, 35.400, 100)} minor={17.700} />
    </Body>
    <TimeAxis f={fA} w={36} h={20} labels={hours(10, 3)} x0={1422} step={193}>
      <DateTag style={{ left: left(fA, 1636) }}>mar. 3 janv. 2023 11:24</DateTag>
    </TimeAxis>
  </Win>
);

const fB1: Frame = { x: 1283, y: 387, w: 594, h: 28 };
const fB2: Frame = { x: 1283, y: 416, w: 594, h: 278 };
const yellowB: [number, number][] = [[1283, 479], [1307.500, 467.500], [1352.500, 462], [1398.500, 458.500], [1443.500, 448.500], [1489.500, 445.500], [1534.500, 451.500], [1580.500, 448.500], [1626.500, 478.500], [1671.500, 491], [1717.500, 489]];
const RsiM15 = () => (
  <Win $grow={354} $gap>
    <Bar side="right" tf="15m" period="15m" periodW={42} units={units4} range="2kU" rangeW={41} />
    <Body $grow={29} $sep>
      <PlotBox $flat>
        <Draw f={fB1}>
          <path d="M1340 407L1418 401L1452 394L1488 393M1535 395L1582 392.500" fill="none" stroke="#6d96ec" strokeDasharray="4 4" />
          <path d="M1488 393L1535 395M1582 392.500L1650 401L1690 403" fill="none" stroke="#dd8a95" strokeDasharray="4 4" />
          <path d="M1690 403L1730 401" stroke="#6d96ec" strokeDasharray="4 4" />
          <H y={401} x1={1283} x2={1877} color={c.yellow} kind="dot" />
          <path d="M1649 397l5 4-5 4z" fill="#35cf45" />
          <path d="M1694 396v7l-5-3.500z" fill="#ee6a74" />
          <path d="M1667 410h3v3h2l-3.500 3-3.500-3h2z" fill="#f0555c" />
          <path d="M1673 415v-3h-3l4.500-4 4.500 4h-3v3z" fill="#35cf45" />
        </Draw>
        <Mark />
      </PlotBox>
      <PriceAxis f={fB1} w={42} ticks={[]}>
        <Tag $kind="last" style={{ top: top(fB1, 399) }}>33 835</Tag>
        <Tag $kind="green" $h={17} style={{ top: top(fB1, 388) }}>5m37s</Tag>
      </PriceAxis>
    </Body>
    <Body $grow={278}>
      <PlotBox>
        <Draw f={fB2}>
          <H y={533} x1={1283} x2={1877} color={c.cyan} kind="long" t={1} />
          <H y={476} x1={1283} x2={1877} color="#1c93a0" t={1} />
          <H y={477} x1={1283} x2={1877} color="#03070d" t={1} />
          <H y={589} x1={1283} x2={1877} color={c.cyan} />
          <path d="M1283 508L1316 504L1353 498L1399 490.500L1444 481L1490 472L1535 465.500L1582 459.500Q1626 454 1672 455.500T1717 458" fill="none" stroke="#d77180" strokeWidth="2" strokeDasharray="5 4" />
          <path d={`M${toPath(yellowB)}`} fill="none" stroke={c.yellow} strokeWidth="2" />
          {yellowB.slice(1).map(([x, y]) => <rect key={x} x={x - 2.500} y={y - 2.500} width="5" height="5" fill="#2f5aa2" stroke={c.yellow} strokeWidth="1.300" />)}
          <Arrow from="1762,435" to="1634,473" head="1626,476L1639,475.500L1633,467" />
        </Draw>
        <LevelHandle style={{ top: top(fB2, 459) }}>70</LevelHandle>
        <Bell width="17" height="17" viewBox="0 0 17 17" style={{ top: top(fB2, 479) }}>
          <circle cx="8.500" cy="8.500" r="8" fill="#cfdcea" />
          <path d="M3 12.500c2-1.500 1.500-8 5.500-9 4 1 3.500 7.500 5.500 9z" fill="#f7d21e" stroke="#8f7208" strokeWidth=".8" />
          <circle cx="8.500" cy="13.500" r="1.600" fill="#e0b010" />
        </Bell>
        <Note $w={122} style={{ left: left(fB2, 1519), top: top(fB2, 498) }}>cassure TMA + Ligne 70</Note>
        <Title $w={116} style={{ left: left(fB2, 1659), top: top(fB2, 610) }}>RSI M15</Title>
      </PlotBox>
      <PriceAxis f={fB2} w={42} ticks={priceTicks(90, 10, 10, 423, 27.800, 50)} />
    </Body>
    <TimeAxis f={fB2} w={42} h={20} x0={1307.500} step={45.500} bold={["10:00", "11:00", "12:00"]}
      labels={["09:15", "09:30", "09:45", "10:00", "10:15", "10:30", "10:45", "11:00", "11:15", "11:30", "11:45", "12:00", "12:15"]} />
  </Win>
);

const fC1: Frame = { x: 1283, y: 741, w: 588, h: 29 };
const fC2: Frame = { x: 1283, y: 771, w: 588, h: 288 };
const RsiH1 = () => (
  <Win $grow={364} $gap>
    <Bar side="right" tf="1h" period="1h" periodW={34} units={units4} range="2kU" rangeW={40} />
    <Body $grow={30} $sep>
      <PlotBox $flat>
        <Draw f={fC1}>
          <path d="M1340 766L1402 760L1504 746.500" fill="none" stroke="#6d96ec" strokeDasharray="4 4" />
          <path d="M1504 746.500L1627 759.500L1650 761" fill="none" stroke="#dd8a95" strokeDasharray="4 4" />
          <H y={761} x1={1283} x2={1871} color={c.yellow} kind="dot" />
          <path d="M1628 758l5 4-5 4z" fill="#35cf45" />
          <path d="M1673 754v7l-5-3.500z" fill="#ee6a74" />
          <path d="M1650 770l4-3 4 3z" fill="#35cf45" />
        </Draw>
        <Mark />
      </PlotBox>
      <PriceAxis f={fC1} w={48} ticks={[]}>
        <Tag $kind="last" style={{ top: top(fC1, 754) }}>33 835</Tag>
        <Tag $kind="green" $h={16} $w={43} style={{ top: top(fC1, 742) }}>20m37s</Tag>
      </PriceAxis>
    </Body>
    <Body $grow={288}>
      <PlotBox>
        <Draw f={fC2}>
          <path d="M1283 887.500L1358 882L1443 878L1504 874.500L1545 877.500L1651 886.500" fill="none" stroke={c.yellow} strokeWidth="2" />
          <path d="M1283 904.500L1358 903L1443 901L1504 899.500L1566 898L1650 896.500" fill="none" stroke="#d77180" strokeWidth="2" strokeDasharray="5 4" />
          <H y={877} x1={1283} x2={1871} color={c.cyan} />
          <H y={915} x1={1283} x2={1871} color={c.cyan} kind="long" t={1} />
          <H y={953} x1={1283} x2={1871} color={c.cyan} />
        </Draw>
        <Title $w={79} $small style={{ left: left(fC2, 1758), top: top(fC2, 972) }}>RSI H1</Title>
      </PlotBox>
      <PriceAxis f={fC2} w={48} ticks={priceTicks(120, 8, 20, 781, 38.300, 100)} minor={19} />
    </Body>
    <TimeAxis f={fC2} w={48} h={19} labels={hours(9, 4)} x0={1357.500} step={146.700} />
  </Win>
);

const Footer = () => (
  <BottomBar>
    <BarButton type="button" $w={31} $edge aria-label="Dessin"><PencilIcon /></BarButton>
    <BarButton type="button" $w={24} aria-label="Menu"><MenuIcon /></BarButton>
    <BarButton type="button" $w={17} aria-label="Plus"><MoreIcon /></BarButton>
    <Scroll>
      <ScrollButton type="button" aria-label="Défiler à gauche"><ArrowGlyph left /></ScrollButton>
      <Track><Thumb /></Track>
      <ScrollButton type="button" aria-label="Défiler à droite"><ArrowGlyph /></ScrollButton>
    </Scroll>
    <BarButton type="button" $w={28} aria-label="Date"><CalendarIcon /></BarButton>
    <BarButton type="button" $w={28} aria-label="Style"><CandleToolIcon /></BarButton>
    <BarButton type="button" $w={25} aria-label="Ajuster"><LensIcon kind="fit" /></BarButton>
    <BarButton type="button" $w={26} aria-label="Zoom arrière"><LensIcon kind="out" /></BarButton>
    <BarButton type="button" $w={26} aria-label="Zoom avant"><LensIcon kind="in" /></BarButton>
    <BarButton type="button" $w={23} aria-label="Masquer"><RowIcon down /></BarButton>
  </BottomBar>
);

export default function App() {
  return (
    <Page>
      <Global />
      <TopStrip />
      <Columns>
        <Column><Chart2m /><Chart15m /><Footer /></Column>
        <Column $right><RsiM2 /><RsiM15 /><RsiH1 /></Column>
      </Columns>
      <BottomStrip />
    </Page>
  );
}
